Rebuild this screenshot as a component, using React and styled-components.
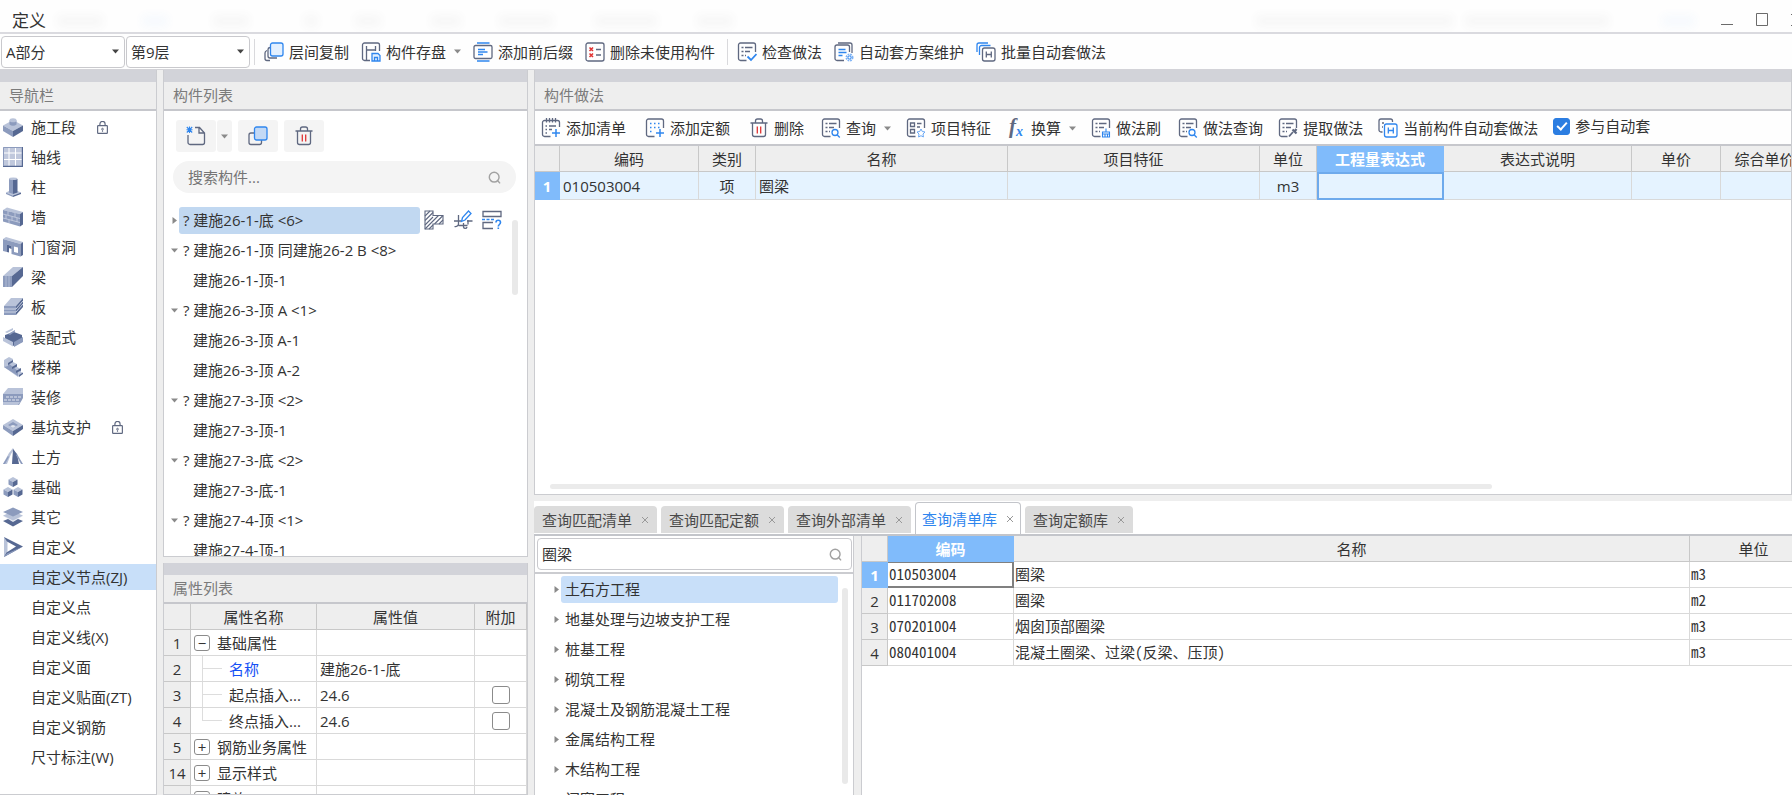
import React, { useState } from "react";
import styled, { createGlobalStyle, css } from "styled-components";

const GlobalStyle = createGlobalStyle`
  *, *::before, *::after {
    box-sizing: border-box;
  }

  body {
    margin: 0;
    overflow: hidden;
    background: #eeeeee;
    color: #333333;
    font: 15px/20px "Open Sans", "Noto Sans CJK SC", sans-serif;
  }

  button, input, select {
    font: inherit;
    color: inherit;
    margin: 0;
  }

  button {
    padding: 0;
    border: 0;
    background: none;
    white-space: nowrap;
  }
`;

/* ---------- icons ---------- */

const INK = "#5f6880";
const BLUE = "#2f86ee";
const RED = "#e03434";
const LIGHT = "#b9c3d9";
const MID = "#8c9bbd";
const DARK = "#566892";

const Svg = styled.svg`
  display: block;
  flex: none;
  width: ${p => p.$size || 20}px;
  height: ${p => p.$size || 20}px;
`;

const Icon = ({ size, children }) => (
  <Svg
    $size={size}
    viewBox="0 0 20 20"
    fill="none"
    stroke={INK}
    strokeWidth="1.3"
    aria-hidden="true"
  >
    {children}
  </Svg>
);

// a sheet whose lower right corner is left open for a small mark
const Sheet = () => (
  <path d="M9.5 18.5H3.5a2 2 0 0 1-2-2V3a2 2 0 0 1 2-2h13a2 2 0 0 1 2 2v7" />
);

const Lines = () => (
  <path d="M4.5 5.5h2M8 5.5h7.5M4.5 9.5h2M8 9.5h5M4.5 13.5h2M8 13.5h1" />
);

const icons = {
  copyFloor: (
    <>
      <path d="M3 8.500C1.500 9 1 9.500 1 11v5.500a2 2 0 0 0 2 2h3" />
      <path d="M6 5.500C4.500 5.700 4 6.500 4 7.500V14a2 2 0 0 0 2 2h7" />
      <rect x="6.500" y="1" width="12.500" height="13" rx="2" fill="#e3f0ff" stroke={BLUE} />
    </>
  ),
  saveDisk: (
    <>
      <path d="M9 18.500H3.500a2 2 0 0 1-2-2V3a2 2 0 0 1 2-2h13a2 2 0 0 1 2 2v6" />
      <path d="M5.500 4v14.500M5.500 8h9M14.500 4v5" />
      <path d="M11 11.500h6l2 2V19h-8zM13.500 19v-3.500h3V19" stroke={BLUE} fill="#e3f0ff" />
    </>
  ),
  affix: (
    <>
      <rect x="1" y="3.500" width="18" height="13" rx="1.500" />
      <path d="M4 1h12.500M4 19h12.500M5 7.500h7M5 10h9.500M5 12.500h5" stroke={BLUE} />
    </>
  ),
  deleteUnused: (
    <>
      <rect x="1" y="1" width="18" height="18" rx="2" />
      <path d="M4.500 5.500l3.500 3.500M8 5.500l-3.500 3.500M4.500 11.500l3.500 3.500M8 11.500l-3.500 3.500" stroke={RED} strokeWidth="1.6" />
      <path d="M11 7.500h5M11 13h5" />
    </>
  ),
  check: (
    <>
      <Sheet />
      <Lines />
      <path d="M10.500 14.500l3.500 3.500 5.500-6" stroke={BLUE} strokeWidth="1.8" />
    </>
  ),
  maintain: (
    <>
      <path d="M10 18.500H3a2 2 0 0 1-2-2V5a2 2 0 0 1 2-2h10.500a2 2 0 0 1 2 2v5" />
      <path d="M4 1h12a2 2 0 0 1 2 2v8" />
      <path d="M4.500 7.500h7M4.500 10.500h8M4.500 13.500h4" stroke={BLUE} />
      <circle cx="15.500" cy="15.500" r="3" stroke="#7db2f5" strokeWidth="2" strokeDasharray="1.6 0.8" />
      <circle cx="15.500" cy="15.500" r="1.500" stroke={BLUE} strokeWidth="1" />
    </>
  ),
  batch: (
    <>
      <path d="M1 10V3a2 2 0 0 1 2-2h9M3.500 13V5.500a2 2 0 0 1 2-2h9" stroke={BLUE} />
      <rect x="6.500" y="6" width="12.500" height="13" rx="2" fill="#fff" />
      <path d="M10.300 9.500v6M15.300 9.500v6M10.300 12.500h5" />
    </>
  ),
  addList: (
    <>
      <path d="M9.500 18.500H3.500a2 2 0 0 1-2-2V4.500a2 2 0 0 1 2-2h13a2 2 0 0 1 2 2V9" />
      <path d="M5.500 0v4.500M8.500 0v4.500M11.500 0v4.500M14.500 0v4.500" />
      <path d="M4.500 8h1.500M8 8h7M4.500 11.500h1.500M8 11.500h3M4.500 15h1.500" />
      <path d="M11 15h8M15 11v8" stroke={BLUE} strokeWidth="1.500" />
    </>
  ),
  addQuota: (
    <>
      <Sheet />
      <path d="M5 5.500h11M5 9.500h11M5 13.500h4" stroke={BLUE} strokeDasharray="1.5 2.500" />
      <path d="M11 15h8M15 11v8" stroke={BLUE} strokeWidth="1.500" />
    </>
  ),
  trash: (
    <>
      <path d="M1.500 5h17M3.500 5v11.500a2 2 0 0 0 2 2h9a2 2 0 0 0 2-2V5M6.500 5V3a2 2 0 0 1 2-2h3a2 2 0 0 1 2 2v2" />
      <path d="M8.300 8.500v7M11.700 8.500v7" stroke={RED} />
    </>
  ),
  query: (
    <>
      <Sheet />
      <Lines />
      <circle cx="14" cy="14.500" r="3" stroke={BLUE} />
      <path d="M16.300 17l2.500 2.500" stroke={BLUE} />
    </>
  ),
  feature: (
    <>
      <Sheet />
      <path d="M4.500 5h4v3.500h-4zM11 5.500h4.500M4.500 11.500h4V15h-4zM11 9h3" />
      <path d="M15 11l1.300 2.500 2.700.5-2 2 .4 3-2.400-1.300-2.400 1.300.4-3-2-2 2.700-.5z" stroke="#6aa8f5" strokeWidth="1" />
    </>
  ),
  fx: (
    <g stroke="none" fontFamily="Liberation Serif, serif" fontStyle="italic" fontWeight="700">
      <text x="3" y="15" fontSize="21" fill={INK}>f</text>
      <text x="10" y="18" fontSize="14" fill={BLUE}>x</text>
    </g>
  ),
  brush: (
    <>
      <Sheet />
      <Lines />
      <path d="M15 10.500v3M11.500 14h7v2h-7zM11.500 16v3h7v-3M14 16.500V19M16.500 16.500V19" stroke={BLUE} strokeWidth="1.1" />
    </>
  ),
  extract: (
    <>
      <Sheet />
      <Lines />
      <path d="M11 18.500l4-4.500" strokeWidth="1.800" />
      <path d="M14.500 11.500l4 4M16.500 13.500l2-2.500" strokeWidth="2.200" />
    </>
  ),
  currentAuto: (
    <>
      <path d="M4.500 14H3a2 2 0 0 1-2-2V3a2 2 0 0 1 2-2h9.500a2 2 0 0 1 2 2v1M4 5h2M4 9h1" />
      <rect x="6.500" y="6" width="12.500" height="13" rx="2" stroke={BLUE} />
      <path d="M10.300 9.500v6M15.300 9.500v6M10.300 12.500h5" stroke={BLUE} />
    </>
  ),
  newItem: (
    <>
      <path d="M9 1.500h4.500L18.500 7v9.500a2 2 0 0 1-2 2H4a2 2 0 0 1-2-2V9M13 1.500V7h5" />
      <path d="M.8 1l5.400 5.500M6.200 1L.8 6.500M3.500.5v6.500M.5 3.800h6" stroke={BLUE} strokeWidth="1.1" />
    </>
  ),
  copy: (
    <>
      <path d="M6 7H3a2 2 0 0 0-2 2v7.500a2 2 0 0 0 2 2h8.500a2 2 0 0 0 2-2V14" />
      <rect x="6.500" y="1" width="12.500" height="13" rx="2" fill="#c3d9f5" stroke={BLUE} />
    </>
  ),
  search: (
    <g stroke="#a2a2a2" strokeWidth="2.200">
      <circle cx="9.500" cy="9.500" r="7.500" />
      <path d="M15 15l3.500 4" />
    </g>
  ),
  lock: (
    <>
      <rect x="2.500" y="7" width="15" height="12" rx="1" strokeWidth="1.800" />
      <path d="M6 7V4.500a4 4 0 0 1 8 0V7" strokeWidth="1.800" />
      <path d="M10 14.500v2" strokeWidth="1.800" />
      <circle cx="10" cy="12.500" r="1.300" strokeWidth="1.500" />
    </>
  ),
  hatch: (
    <g strokeWidth="1.1">
      <path d="M1 1h8v4.500h10v8.500H9v5H1z" />
      <path d="M1 6l5-5M1 10.500L9 2.500M1 15L9 7M1 19l13.500-13.500M5 19l4-4M10.500 14L19 5.500M15 14l4-4" />
    </g>
  ),
  edit: (
    <>
      <path d="M1 11h7M14 11h5.500M5.500 5v8.500a3 3 0 0 1-4 3M10.500 13v4a1.800 1.800 0 0 0 3.500 0M15 10v4.500M5.500 15.500h9" />
      <path d="M8.500 11.500l1-4 6-6.500 2.500 2.500-6 6.500z" fill="#fff" stroke={BLUE} />
    </>
  ),
  unknown: (
    <>
      <path d="M1 6.500V1.500h18v5zM11 18.500H1V12.500h10" />
      <path d="M0 9.500h13" stroke={BLUE} strokeDasharray="3 1.500" />
      <path d="M14 12.500c0-3 4.500-3 4.500 0 0 2-2.200 2-2.200 4M16.300 17.500V19" stroke={BLUE} strokeWidth="1.600" />
    </>
  ),
};

const navIcons = {
  section: (
    <>
      <path fill={LIGHT} d="M10 3l10 5.500L10 14 0 8.500z" />
      <path fill={MID} d="M0 8.500L10 14v6L0 14z" />
      <path fill={DARK} d="M20 8.500L10 14v6l10-6z" />
      <path fill={MID} d="M6.500 3.500v4c2 1.700 5 1.700 7 0v-4z" />
      <ellipse cx="10" cy="3.300" rx="3.500" ry="2" fill={LIGHT} />
    </>
  ),
  axis: (
    <>
      <path fill="#c0c8dc" d="M0 0h20v20H0z" />
      <path fill={DARK} d="M18.800 0H20v20H0v-1.200h18.800z" />
      <path stroke="#fff" strokeWidth="1" d="M6 1v17.500M12.500 1v17.500M1 6h17.500M1 12.500h17.500" />
      <path stroke={MID} d="M.5 19V.5H19" fill="none" />
    </>
  ),
  column: (
    <>
      <path fill={LIGHT} d="M10 12l8 3.500-8 3-7-3z" />
      <path fill={DARK} d="M18 15.500v1.500l-8 3v-1.500z" />
      <path fill={MID} d="M3 15.500V17l7 3v-1.500z" />
      <path fill={MID} d="M6 2h4v15l-4-1.500z" />
      <path fill={DARK} d="M10 2h4.500v13.500L10 17z" />
      <ellipse cx="10.200" cy="1.800" rx="4.200" ry="1.300" fill={LIGHT} />
    </>
  ),
  wall: (
    <>
      <path fill={LIGHT} d="M0 3l4-2.500L20 5l-3 2z" />
      <path fill={MID} d="M0 3l17 4v12.500L0 14.500z" />
      <path fill={DARK} d="M17 7l3-2v12.500l-3 2z" />
      <path stroke="#c3cbde" strokeWidth=".9" d="M0 7l17 4.500M0 11l17 4.500M5 4v4M12 6v4M3 8v4M9 9.500v4M14 11v4M6 12.500v3.500" />
    </>
  ),
  opening: (
    <>
      <path fill={LIGHT} d="M0 2l3-2 17 5-2.500 2z" />
      <path fill={MID} fillRule="evenodd" d="M0 2l17.500 5v12.500l-9-2.500V9L4 7.500V15l-4-1zM11 9.500l4 1v5.500l-4-1z" />
      <path fill={DARK} d="M17.500 7L20 5v13l-2.500 1.500zM4 7.500L8.500 9v3L6 11v4.500L4 15z" />
    </>
  ),
  beam: (
    <>
      <path fill={LIGHT} d="M0 9L10 0h10L9 9z" />
      <path fill={MID} d="M0 9h9v11H0z" />
      <path fill={DARK} d="M9 9L20 0v9L9 20z" />
      <path stroke={LIGHT} strokeWidth=".8" d="M3 9v11M6 9v11" />
    </>
  ),
  slab: (
    <>
      <path fill={LIGHT} d="M1 9L8 1h12l-7 8z" />
      <path fill={MID} d="M1 9h12v9H1z" />
      <path fill={DARK} d="M13 9l7-8v9l-7 8z" />
      <path stroke="#d5dbe9" strokeWidth=".9" fill="none" d="M1 12h12l7-8M1 15h12l7-8" />
    </>
  ),
  prefab: (
    <>
      <path fill={DARK} d="M2 8l9-3 8 3v7l-8 4-9-5z" />
      <path fill={LIGHT} d="M2 5l8-4v2L4 6zM0 10l10 5v4.500L0 14z" />
      <path fill={MID} d="M11 15l9-5v5l-9 5z" />
      <path fill={MID} d="M5 7l7-4v1.500L7 8z" />
    </>
  ),
  stairs: (
    <>
      <path fill={LIGHT} d="M1 3l5-3 4 2v3l4 2v3l4 2v3l2 1-5 4L1 10z" />
      <path fill={MID} d="M5 6l10 8v5L1 10l4-1z" />
      <path fill={DARK} d="M5 6l5-3v2L5 8zM9 10l5-3v2.500L9 12zM13 14l5-3v2.500L13 16zM16 18l4-2.500V17l-4 3z" />
    </>
  ),
  finish: (
    <>
      <path fill={LIGHT} d="M5 1h15v6H0z" />
      <path fill={MID} d="M0 7h20v4l-4 7H0z" />
      <path stroke="#e4e8f1" strokeDasharray="3 1" d="M3 10h15M1 13h15" />
      <path fill={LIGHT} d="M0 15h17l-2 3H0z" />
    </>
  ),
  pit: (
    <>
      <path fill={LIGHT} d="M10 2l10 6-10 6L0 8z" />
      <path fill={MID} d="M0 8l10 6v5L0 12z" />
      <path fill={DARK} d="M20 8l-10 6v5l10-7z" />
      <path fill={MID} d="M10 5l5 3-5 3-5-3z" />
      <path fill="#dfe4ee" d="M10 8l3 1-3 2-3-2z" />
    </>
  ),
  earth: (
    <>
      <path fill={LIGHT} d="M0 17L6 6l4-5 3 6-6 10z" />
      <path fill="#fff" d="M4 17l4-10 2-3v13z" />
      <path fill={DARK} d="M10 2l4 5 2 10H9z" />
      <path fill={MID} d="M14 7l6 10h-2l-5-9zM0 17l5-8 1 1-4 7z" />
    </>
  ),
  foundation: (
    <>
      <path fill={LIGHT} d="M10 0l4.500 2.500L10 5 5.500 2.500zM5 10l4.500 2.500L5 15 .5 12.500zM15 10l4.500 2.500L15 15l-4.500-2.500z" />
      <path fill={MID} d="M5.500 2.500L10 5v5L5.500 7.500zM.5 12.500L5 15v5L.5 17.500zM10.500 12.500L15 15v5l-4.500-2.500z" />
      <path fill={DARK} d="M14.500 2.500L10 5v5l4.500-2.500zM9.500 12.500L5 15v5l4.500-2.500zM19.500 12.500L15 15v5l4.500-2.500z" />
    </>
  ),
  other: (
    <>
      <path fill={DARK} d="M0 14l10-4 10 4-10 5.500z" />
      <path fill="#e6eaf2" d="M0 9l10-4 10 4-10 6z" />
      <path fill={LIGHT} d="M0 8.500l10-4 10 4-10 5z" />
      <path fill={MID} d="M0 5l10-4.500L20 5l-10 4.500z" />
    </>
  ),
  custom: (
    <>
      <path fill={LIGHT} d="M1 0l3.500 3v13L1 20z" />
      <path fill={DARK} fillRule="evenodd" d="M1 0l19 9.500L1 20l2.500-4.500 9.500-6L4 4.500z" />
      <path fill={MID} d="M4 16.500L20 9.500 1 20z" />
    </>
  ),
};

const Caret = ({ right, color = "#8a8a8a" }) => (
  <Svg $size={7} viewBox="0 0 7 7" fill={color} aria-hidden="true">
    <path d={right ? "M1.500 0L6 3.500 1.500 7z" : "M0 1.500h7L3.500 5.500z"} />
  </Svg>
);

/* ---------- frame ---------- */

const Window = styled.div`
  display: flex;
  flex-direction: column;
  height: 100vh;
  overflow: hidden;
`;

const TitleBar = styled.header`
  display: flex;
  align-items: center;
  flex: none;
  height: 34px;
  padding: 10px 0 0 12px;
  background: #fefefe;
  border-bottom: 2px solid #dadadf;
  overflow: hidden;
`;

const Title = styled.h1`
  margin: 0;
  font-size: 17px;
  font-weight: 400;
  line-height: 20px;
`;

// window behind shows faintly through the title bar
const Ghost = styled.span`
  flex: none;
  width: ${p => p.$w}px;
  height: 12px;
  margin-left: ${p => p.$gap}px;
  background: ${p => (p.$blue ? "#3f8cf0" : "#555555")};
  opacity: 0.04;
  filter: blur(5px);
`;

const Spacer = styled.span`
  flex: 1;
`;

const WindowButtons = styled.div`
  display: flex;
  flex: none;
  gap: 23px;
  width: 71px;
  margin-left: 26px;
  padding-bottom: 2px;
  overflow: hidden;
`;

const WindowButton = styled.button`
  flex: none;
  width: 12px;
  height: 14px;

  & > svg {
    display: block;
  }
`;

const bar = css`
  display: flex;
  align-items: center;
  flex: none;
  background: #fefefe;
`;

const MainBar = styled.div`
  ${bar}
  height: 36px;
  padding: 0 1px;
  gap: 12px;
  border-bottom: 1px solid #d3d3d8;
`;

const Selects = styled.div`
  display: flex;
  gap: 1px;
  margin-right: -8px;
`;

const SelectBox = styled.label`
  display: flex;
  align-items: center;
  width: 124px;
  height: 32px;
  padding: 0 5px 0 4px;
  border: 1px solid #c9c9cd;
  border-radius: 4px;
  background: #ffffff;
`;

const Select = styled.select`
  flex: 1;
  appearance: none;
  padding: 0;
  border: 0;
  outline: 0;
  background: transparent;
`;

const Divider = styled.span`
  width: 1px;
  height: 26px;
  background: #d9d9dc;
  margin-right: -3px;
`;

const ToolButton = styled.button`
  display: flex;
  align-items: center;
  gap: 5px;

  & > svg:nth-of-type(2) {
    margin-left: 3px;
  }
`;

const Tool = ({ icon, label, menu }) => (
  <ToolButton type="button">
    <Icon>{icons[icon]}</Icon>
    <span>{label}</span>
    {menu && <Caret />}
  </ToolButton>
);

const Work = styled.main`
  display: flex;
  flex: 1;
  gap: 6px;
  min-height: 0;
`;

const Column = styled.div`
  display: flex;
  flex-direction: column;
  gap: 6px;
  flex: ${p => (p.$width ? `0 0 ${p.$width}px` : 1)};
  min-width: 0;
`;

const Panel = styled.section`
  display: flex;
  flex-direction: column;
  flex: ${p => (p.$height ? `0 0 ${p.$height}px` : 1)};
  min-height: 0;
  background: #ffffff;
  border: solid #cbccd0;
  border-width: 0 1px 1px ${p => (p.$flush ? 0 : 1)}px;
  overflow: hidden;
`;

const PanelTitle = styled.h2`
  flex: none;
  height: 41px;
  margin: 0;
  padding: 3px 0 0 9px;
  border-top: 12px solid #d2d3d9;
  border-bottom: 2px solid #c6c7cc;
  background: #eeeeee;
  color: #7b7b7b;
  font-size: 15px;
  font-weight: 400;
  line-height: 20px;
`;

/* ---------- navigation ---------- */

const NavList = styled.ul`
  margin: 0;
  padding: 0;
  list-style: none;
`;

const NavItem = styled.li`
  display: flex;
  align-items: center;
  height: 26px;
  margin: 0 0 4px;
  background: ${p => (p.$active ? "#c8dff9" : "transparent")};

  &:first-child {
    margin-top: 3px;
  }
`;

const NavLink = styled.a`
  display: flex;
  align-items: center;
  gap: 8px;
  padding-left: ${p => (p.$sub ? 31 : 3)}px;
  color: inherit;
  text-decoration: none;
`;

const LockSlot = styled.span`
  margin-left: 20px;
`;

const navItems = [
  { icon: "section", label: "施工段", locked: true },
  { icon: "axis", label: "轴线" },
  { icon: "column", label: "柱" },
  { icon: "wall", label: "墙" },
  { icon: "opening", label: "门窗洞" },
  { icon: "beam", label: "梁" },
  { icon: "slab", label: "板" },
  { icon: "prefab", label: "装配式" },
  { icon: "stairs", label: "楼梯" },
  { icon: "finish", label: "装修" },
  { icon: "pit", label: "基坑支护", locked: true },
  { icon: "earth", label: "土方" },
  { icon: "foundation", label: "基础" },
  { icon: "other", label: "其它" },
  { icon: "custom", label: "自定义" },
  { label: "自定义节点(ZJ)" },
  { label: "自定义点" },
  { label: "自定义线(X)" },
  { label: "自定义面" },
  { label: "自定义贴面(ZT)" },
  { label: "自定义钢筋" },
  { label: "尺寸标注(W)" },
];

const Navigation = () => {
  const [active, setActive] = useState("自定义节点(ZJ)");
  return (
    <Panel $flush as="nav">
      <PanelTitle>导航栏</PanelTitle>
      <NavList>
        {navItems.map(({ icon, label, locked }) => (
          <NavItem key={label} $active={label === active}>
            <NavLink href="#" $sub={!icon} onClick={() => setActive(label)}>
              {icon && (
                <Svg viewBox="0 0 20 20" aria-hidden="true">
                  {navIcons[icon]}
                </Svg>
              )}
              {label}
            </NavLink>
            {locked && (
              <LockSlot>
                <Icon size={13}>{icons.lock}</Icon>
              </LockSlot>
            )}
          </NavItem>
        ))}
      </NavList>
    </Panel>
  );
};

/* ---------- component list ---------- */

const ListTools = styled.div`
  display: flex;
  flex: none;
  gap: 6px;
  padding: 9px 12px 9px;
`;

const SquareGroup = styled.div`
  display: flex;
  gap: 1px;
`;

const SquareButton = styled.button`
  display: flex;
  align-items: center;
  justify-content: center;
  width: ${p => (p.$narrow ? 15 : 40)}px;
  height: 32px;
  border-radius: 3px;
  background: #f4f4f4;
`;

const Pill = styled.label`
  display: flex;
  align-items: center;
  flex: none;
  height: 32px;
  margin: 0 11px 12px 9px;
  padding: 0 15px;
  border-radius: 16px;
  background: #f4f4f4;
`;

const TextInput = styled.input`
  flex: 1;
  min-width: 0;
  padding: 0;
  border: 0;
  outline: 0;
  background: transparent;

  &::placeholder {
    color: #757575;
    opacity: 1;
  }
`;

const Scroller = styled.div`
  display: flex;
  flex: 1;
  min-height: 0;
  overflow: hidden;
`;

const Tree = styled.ul`
  flex: 1;
  min-width: 0;
  margin: 0;
  padding: 0 ${p => p.$end || 0}px 0 ${p => p.$indent}px;
  list-style: none;
`;

const TreeRow = styled.li`
  display: flex;
  align-items: center;
  gap: 1px;
  height: 30px;
`;

const Twist = styled.span`
  flex: none;
  width: 7px;
`;

const TreeLabel = styled.span`
  display: flex;
  align-items: center;
  flex: 1;
  height: 27px;
  padding-left: ${p => p.$pad}px;
  border-radius: 3px;
  background: ${p => p.$on || "transparent"};
  white-space: pre;
`;

const RowTools = styled.span`
  display: flex;
  gap: 9px;
  width: 88px;
  margin-left: 3px;
`;

const ScrollTrack = styled.div`
  flex: none;
  width: 6px;
  margin: ${p => p.$top}px ${p => p.$right}px 0 0;
`;

const ScrollThumb = styled.div`
  height: ${p => p.$length}px;
  border-radius: 3px;
  background: #e9e9e9;
`;

const components = [
  { label: "? 建施26-1-底 <6>", closed: true, selected: true },
  { label: "? 建施26-1-顶 同建施26-2 B <8>" },
  { label: "建施26-1-顶-1", child: true },
  { label: "? 建施26-3-顶 A <1>" },
  { label: "建施26-3-顶 A-1", child: true },
  { label: "建施26-3-顶 A-2", child: true },
  { label: "? 建施27-3-顶 <2>" },
  { label: "建施27-3-顶-1", child: true },
  { label: "? 建施27-3-底 <2>" },
  { label: "建施27-3-底-1", child: true },
  { label: "? 建施27-4-顶 <1>" },
  { label: "建施27-4-顶-1", child: true },
];

const ComponentList = () => (
  <Panel>
    <PanelTitle>构件列表</PanelTitle>
    <ListTools>
      <SquareGroup>
        <SquareButton type="button" aria-label="新建">
          <Icon>{icons.newItem}</Icon>
        </SquareButton>
        <SquareButton type="button" $narrow aria-label="新建选项">
          <Caret />
        </SquareButton>
      </SquareGroup>
      <SquareButton type="button" aria-label="复制">
        <Icon>{icons.copy}</Icon>
      </SquareButton>
      <SquareButton type="button" aria-label="删除">
        <Icon>{icons.trash}</Icon>
      </SquareButton>
    </ListTools>
    <Pill>
      <TextInput placeholder="搜索构件..." aria-label="搜索构件" />
      <Icon size={13}>{icons.search}</Icon>
    </Pill>
    <Scroller>
      <Tree $indent={7}>
        {components.map(item => (
          <TreeRow key={item.label}>
            <Twist>{!item.child && <Caret right={item.closed} />}</Twist>
            <TreeLabel
              $pad={item.child ? 14 : 4}
              $on={item.selected && "#c1d8f1"}
            >
              {item.label}
            </TreeLabel>
            {item.selected && (
              <RowTools>
                <Icon>{icons.hatch}</Icon>
                <Icon>{icons.edit}</Icon>
                <Icon>{icons.unknown}</Icon>
              </RowTools>
            )}
          </TreeRow>
        ))}
      </Tree>
      <ScrollTrack $top={15} $right={9}>
        <ScrollThumb $length={75} />
      </ScrollTrack>
    </Scroller>
  </Panel>
);

/* ---------- grids ---------- */

const Grid = styled.table`
  width: 100%;
  table-layout: fixed;
  border-collapse: separate;
  border-spacing: 0;
`;

const cell = css`
  padding: 0 3px;
  border: solid #d9d9d9;
  border-width: 0 1px 1px 0;
  font-weight: 400;
  text-align: ${p => p.$align || "left"};
  white-space: nowrap;
  overflow: hidden;
`;

const Th = styled.th`
  ${cell}
  height: ${p => p.$h || 26}px;
  padding: 0;
  text-align: center;
  border-color: ${p => (p.$on ? "#80bbfb" : "#c8c8c8")};
  background: ${p => (p.$on ? "#80bbfb" : "#eeeeee")};
  color: ${p => (p.$on ? "#ffffff" : "inherit")};
  font-weight: ${p => (p.$on ? 700 : 400)};
`;

const Td = styled.td`
  ${cell}
  height: ${p => p.$h || 26}px;
  background: ${p => p.$bg || "#ffffff"};
`;

const EditingTd = styled(Td)`
  border: 2px solid #6eaaec;
`;

const FocusTd = styled(Td)`
  border: 1px solid #808080;
  border-width: 1px 2px 2px 0;
`;

const Cols = ({ widths }) => (
  <colgroup>
    {widths.map((w, i) => (
      <col key={i} style={{ width: w || undefined }} />
    ))}
  </colgroup>
);

/* ---------- properties ---------- */

const PropName = styled.div`
  display: flex;
  align-items: center;
  gap: 7px;
  height: 100%;
`;

const Toggle = styled.button`
  display: grid;
  place-items: center;
  width: 16px;
  height: 16px;
  border: 1px solid #8b8b8b;
  border-radius: 3px;
  background: #ffffff;
  line-height: 12px;
`;

const Branch = styled.span`
  display: flex;
  flex-direction: column;
  width: 20px;
  height: 25px;
  margin-left: 8px;

  &::before {
    content: "";
    height: 13px;
    border: solid #dddddd;
    border-width: 0 0 1px 1px;
  }

  &::after {
    content: "";
    height: 12px;
    border-left: ${p => (p.$last ? 0 : 1)}px solid #dddddd;
  }
`;

const PropText = styled.span`
  color: ${p => (p.$blue ? "#1450f5" : "inherit")};
`;

const SmallCheck = styled.input`
  display: block;
  appearance: none;
  width: 18px;
  height: 18px;
  margin: 0 auto;
  border: 1px solid #8b8b8b;
  border-radius: 3px;
  background: #ffffff;
`;

const props = [
  { no: 1, name: "基础属性", group: "−" },
  { no: 2, name: "名称", value: "建施26-1-底", blue: true },
  { no: 3, name: "起点插入...", value: "24.6", extra: true },
  { no: 4, name: "终点插入...", value: "24.6", extra: true, last: true },
  { no: 5, name: "钢筋业务属性", group: "+" },
  { no: 14, name: "显示样式", group: "+" },
  { no: 18, name: "建施", group: "+" },
];

const PropertyList = () => (
  <Panel $height={232}>
    <PanelTitle>属性列表</PanelTitle>
    <Grid>
      <Cols widths={[27, 126, 158, 0]} />
      <thead>
        <tr>
          <Th />
          <Th>属性名称</Th>
          <Th>属性值</Th>
          <Th>附加</Th>
        </tr>
      </thead>
      <tbody>
        {props.map(p => (
          <tr key={p.no}>
            <Th>{p.no}</Th>
            <Td>
              <PropName>
                {p.group ? (
                  <Toggle type="button">{p.group}</Toggle>
                ) : (
                  <Branch $last={p.last} />
                )}
                <PropText $blue={p.blue}>{p.name}</PropText>
              </PropName>
            </Td>
            <Td>{p.value}</Td>
            <Td>
              {p.extra && (
                <SmallCheck type="checkbox" aria-label={`${p.name} 附加`} />
              )}
            </Td>
          </tr>
        ))}
      </tbody>
    </Grid>
  </Panel>
);

/* ---------- component practice ---------- */

const PracticeBar = styled.div`
  ${bar}
  height: 35px;
  padding: 1px 6px 0;
  gap: 17px;
  border-bottom: 2px solid #c6c7cc;
`;

const ToolGroup = styled.div`
  display: flex;
  gap: ${p => p.$gap}px;
`;

const AutoLabel = styled.label`
  display: flex;
  align-items: center;
  gap: 5px;
  margin-left: -2px;
  padding-bottom: 4px;
  white-space: nowrap;
`;

const BlueCheck = styled.input`
  display: grid;
  place-items: center;
  appearance: none;
  width: 17px;
  height: 17px;
  border-radius: 3px;
  border: 1px solid #2b7de1;

  &:checked {
    background: #2b7de1;
  }

  &:checked::before {
    content: "";
    width: 6px;
    height: 10px;
    margin-bottom: 3px;
    border: solid #ffffff;
    border-width: 0 2px 2px 0;
    transform: rotate(42deg);
  }
`;

const GridArea = styled.div`
  flex: 1;
  min-height: 0;
  overflow: hidden;
`;

const WideGrid = styled(Grid)`
  width: 1274px;
  min-width: 100%;
`;

const HScroll = styled.div`
  flex: none;
  width: 75%;
  height: 5px;
  margin: 0 0 5px 15px;
  border-radius: 3px;
  background: #ebebeb;
`;

const ROW = "#e5f3ff";

const Practice = () => (
  <Panel>
    <PanelTitle>构件做法</PanelTitle>
    <PracticeBar>
      <ToolGroup $gap={19}>
        <Tool icon="addList" label="添加清单" />
        <Tool icon="addQuota" label="添加定额" />
        <Tool icon="trash" label="删除" />
      </ToolGroup>
      <ToolGroup $gap={15}>
        <Tool icon="query" label="查询" menu />
        <Tool icon="feature" label="项目特征" />
        <Tool icon="fx" label="换算" menu />
        <Tool icon="brush" label="做法刷" />
      </ToolGroup>
      <ToolGroup $gap={15}>
        <Tool icon="query" label="做法查询" />
        <Tool icon="extract" label="提取做法" />
        <Tool icon="currentAuto" label="当前构件自动套做法" />
      </ToolGroup>
      <AutoLabel>
        <BlueCheck type="checkbox" defaultChecked />
        参与自动套
      </AutoLabel>
    </PracticeBar>
    <GridArea>
      <WideGrid>
        <Cols widths={[25, 139, 57, 252, 252, 57, 127, 188, 89, 88]} />
        <thead>
          <tr>
            <Th />
            <Th>编码</Th>
            <Th>类别</Th>
            <Th>名称</Th>
            <Th>项目特征</Th>
            <Th>单位</Th>
            <Th $on>工程量表达式</Th>
            <Th>表达式说明</Th>
            <Th>单价</Th>
            <Th>综合单价</Th>
          </tr>
        </thead>
        <tbody>
          <tr>
            <Th $on $h={28}>1</Th>
            <Td $bg={ROW}>010503004</Td>
            <Td $bg={ROW} $align="center">项</Td>
            <Td $bg={ROW}>圈梁</Td>
            <Td $bg={ROW} />
            <Td $bg={ROW} $align="center">m3</Td>
            <EditingTd $bg={ROW} />
            <Td $bg={ROW} />
            <Td $bg={ROW} />
            <Td $bg={ROW} />
          </tr>
        </tbody>
      </WideGrid>
    </GridArea>
    <HScroll />
  </Panel>
);

/* ---------- query ---------- */

const QueryPanel = styled.section`
  display: flex;
  flex-direction: column;
  flex: 0 0 294px;
  min-height: 0;
  background: #ffffff;
`;

const Tabs = styled.div`
  display: flex;
  align-items: flex-end;
  flex: none;
  gap: 4px;
  height: 35px;
  border-bottom: 2px solid #c3c5ca;
`;

const Tab = styled.div`
  display: flex;
  align-items: center;
  gap: 9px;
  height: ${p => (p.$on ? 32 : 27)}px;
  margin-bottom: ${p => (p.$on ? 0 : 1)}px;
  padding: 0 ${p => (p.$on ? 6 : 8)}px;
  border: solid #c3c5ca;
  border-width: ${p => (p.$on ? "1px 1px 0" : 0)};
  border-radius: 4px 4px 0 0;
  background: ${p => (p.$on ? "#ffffff" : "#dcdcdc")};
  color: ${p => (p.$on ? BLUE : "#4a4a4a")};
`;

const TabClose = styled.button`
  width: 8px;
  height: 8px;
`;

const QueryBody = styled.div`
  display: flex;
  flex: 1;
  gap: 7px;
  min-height: 0;
  background: #eeeeee;
`;

const QuerySide = styled.div`
  display: flex;
  flex-direction: column;
  flex: 0 0 320px;
  border: solid #cbccd0;
  border-width: 0 1px;
  background: #ffffff;
`;

const QuerySearch = styled.label`
  display: flex;
  align-items: center;
  flex: none;
  height: 32px;
  margin: 2px 1px 2px 2px;
  padding: 0 9px 0 4px;
  border: 1px solid #c9c9cd;
  border-radius: 4px;
`;

const SideBody = styled(Scroller)`
  border-top: 2px solid #cbccd0;
`;

const ResultArea = styled.div`
  flex: 1;
  min-width: 0;
  border-left: 1px solid #cbccd0;
  background: #ffffff;
  overflow: hidden;
`;

// the unit column runs on past the right edge of the window
const ResultGrid = styled(Grid)`
  width: calc(100% + 26px);
`;

const ResultRow = styled.tr`
  td {
    padding: 0 1px 2px;
    font-family: "Noto Sans Mono CJK SC", "Liberation Mono", monospace;
  }
`;

const tabs = ["查询匹配清单", "查询匹配定额", "查询外部清单", "查询清单库", "查询定额库"];

const chapters = [
  "土石方工程",
  "地基处理与边坡支护工程",
  "桩基工程",
  "砌筑工程",
  "混凝土及钢筋混凝土工程",
  "金属结构工程",
  "木结构工程",
  "门窗工程",
];

const results = [
  ["010503004", "圈梁", "m3"],
  ["011702008", "圈梁", "m2"],
  ["070201004", "烟囱顶部圈梁", "m3"],
  ["080401004", "混凝土圈梁、过梁(反梁、压顶)", "m3"],
];

const Query = () => {
  const [tab, setTab] = useState("查询清单库");
  const [keyword, setKeyword] = useState("圈梁");
  return (
    <QueryPanel>
      <Tabs>
        {tabs.map(name => (
          <Tab key={name} $on={name === tab}>
            <button type="button" onClick={() => setTab(name)}>
              {name}
            </button>
            <TabClose type="button" aria-label={`关闭${name}`}>
              <Svg $size={8} viewBox="0 0 8 8" stroke="#999999">
                <path d="M1 1l6 6M7 1L1 7" />
              </Svg>
            </TabClose>
          </Tab>
        ))}
      </Tabs>
      <QueryBody>
        <QuerySide>
          <QuerySearch>
            <TextInput
              value={keyword}
              aria-label="查询"
              onChange={e => setKeyword(e.target.value)}
            />
            <Icon size={13}>{icons.search}</Icon>
          </QuerySearch>
          <SideBody>
            <Tree $indent={18} $end={4}>
              {chapters.map((name, i) => (
                <TreeRow key={name}>
                  <Twist>
                    <Caret right />
                  </Twist>
                  <TreeLabel $pad={4} $on={i === 0 && "#c8dff9"}>
                    {name}
                  </TreeLabel>
                </TreeRow>
              ))}
            </Tree>
            <ScrollTrack $top={14} $right={5}>
              <ScrollThumb $length={196} />
            </ScrollTrack>
          </SideBody>
        </QuerySide>
        <ResultArea>
          <ResultGrid>
            <Cols widths={[26, 126, 0, 128]} />
            <thead>
              <tr>
                <Th />
                <Th $on>编码</Th>
                <Th>名称</Th>
                <Th>单位</Th>
              </tr>
            </thead>
            <tbody>
              {results.map(([code, name, unit], i) => {
                const CodeCell = i === 0 ? FocusTd : Td;
                return (
                  <ResultRow key={code}>
                    <Th $on={i === 0}>{i + 1}</Th>
                    <CodeCell>{code}</CodeCell>
                    <Td>{name}</Td>
                    <Td>{unit}</Td>
                  </ResultRow>
                );
              })}
            </tbody>
          </ResultGrid>
        </ResultArea>
      </QueryBody>
    </QueryPanel>
  );
};

/* ---------- app ---------- */

const ghosts = [
  { w: 46, gap: 11 },
  { w: 26, gap: 39, blue: true },
  { w: 36, gap: 45 },
  { w: 14, gap: 55 },
  { w: 26, gap: 37 },
  { w: 30, gap: 50 },
  { w: 54, gap: 38 },
  { w: 62, gap: 42 },
  { w: 36, gap: 40 },
];

const App = () => (
  <Window>
    <GlobalStyle />
    <TitleBar>
      <Title>定义</Title>
      {ghosts.map((g, i) => (
        <Ghost key={i} $w={g.w} $gap={g.gap} $blue={g.blue} />
      ))}
      <Spacer />
      <Ghost $w={197} $gap={0} />
      <Ghost $w={144} $gap={12} />
      <Ghost $w={33} $gap={53} $blue />
      <WindowButtons>
        <WindowButton type="button" aria-label="最小化">
          <svg width="12" height="14" viewBox="0 0 12 14" stroke="#6b6b6b">
            <path d="M0 11.500h12" />
          </svg>
        </WindowButton>
        <WindowButton type="button" aria-label="最大化">
          <svg width="12" height="14" viewBox="0 0 12 14" stroke="#6b6b6b" fill="none">
            <path d="M.5.500h11v12H.5z" />
          </svg>
        </WindowButton>
        <WindowButton type="button" aria-label="关闭">
          <svg width="12" height="14" viewBox="0 0 12 14" stroke="#6b6b6b">
            <path d="M0 1l12 12M12 1L0 13" />
          </svg>
        </WindowButton>
      </WindowButtons>
    </TitleBar>
    <MainBar>
      <Selects>
        <SelectBox>
          <Select aria-label="部分">
            <option>A部分</option>
          </Select>
          <Caret color="#444444" />
        </SelectBox>
        <SelectBox>
          <Select aria-label="楼层">
            <option>第9层</option>
          </Select>
          <Caret color="#444444" />
        </SelectBox>
      </Selects>
      <Divider />
      <Tool icon="copyFloor" label="层间复制" />
      <Tool icon="saveDisk" label="构件存盘" menu />
      <Tool icon="affix" label="添加前后缀" />
      <Tool icon="deleteUnused" label="删除未使用构件" />
      <Divider />
      <Tool icon="check" label="检查做法" />
      <Tool icon="maintain" label="自动套方案维护" />
      <Tool icon="batch" label="批量自动套做法" />
    </MainBar>
    <Work>
      <Column $width={157}>
        <Navigation />
      </Column>
      <Column $width={365}>
        <ComponentList />
        <PropertyList />
      </Column>
      <Column>
        <Practice />
        <Query />
      </Column>
    </Work>
  </Window>
);

export default App;
